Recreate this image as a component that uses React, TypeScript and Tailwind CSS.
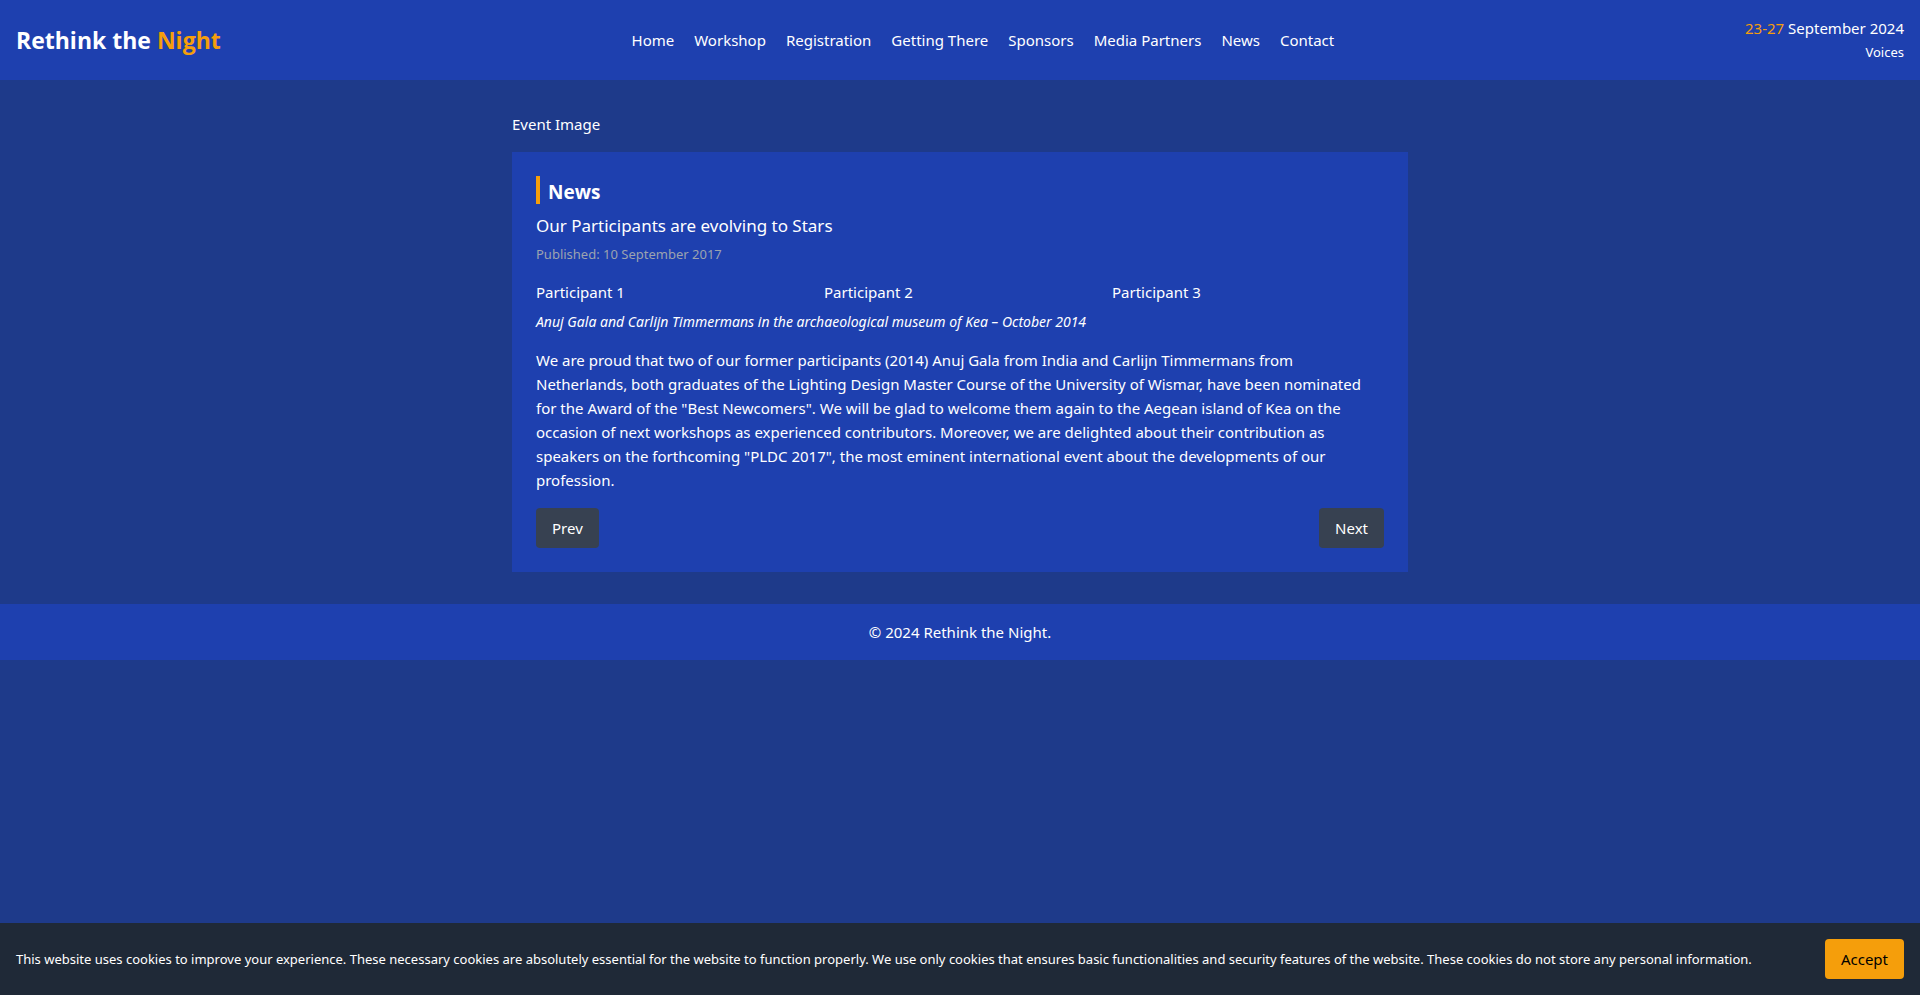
const navLinks = [
  'Home',
  'Workshop',
  'Registration',
  'Getting There',
  'Sponsors',
  'Media Partners',
  'News',
  'Contact',
];

const participants = ['Participant 1', 'Participant 2', 'Participant 3'];

function Header() {
  return (
    <header className="flex items-center justify-between bg-[#1e40af] p-4">
      <div className="font-['Open_Sans',sans-serif] text-[23px] leading-8 font-bold">
        Rethink the <span className="text-[#f59e0b]">Night</span>
      </div>
      <nav className="flex gap-5">
        {navLinks.map((label) => (
          <a key={label} href="#">
            {label}
          </a>
        ))}
      </nav>
      <div className="text-right">
        <div>
          <span className="text-[#f59e0b]">23-27</span> September 2024
        </div>
        <a href="#" className="block text-[13px] leading-6">
          Voices
        </a>
      </div>
    </header>
  );
}

function NewsCard() {
  return (
    <section className="bg-[#1e40af] p-6">
      <h2 className="border-l-4 border-[#f59e0b] pt-1 pl-2 font-['Open_Sans',sans-serif] text-[19px] leading-6 font-bold">
        News
      </h2>
      <h3 className="mt-2 text-[17px] leading-7">Our Participants are evolving to Stars</h3>
      <p className="mt-1 text-[13px] leading-5 text-[#9ca3af]">Published: 10 September 2017</p>
      <div className="mt-4 grid grid-cols-3 gap-4">
        {participants.map((name) => (
          <div key={name}>{name}</div>
        ))}
      </div>
      <p className="mt-2 text-[14px] leading-5 italic">
        Anuj Gala and Carlijn Timmermans in the archaeological museum of Kea – October 2014
      </p>
      <p className="mt-4">
        We are proud that two of our former participants (2014) Anuj Gala from India and Carlijn
        Timmermans from Netherlands, both graduates of the Lighting Design Master Course of the
        University of Wismar, have been nominated for the Award of the "Best Newcomers". We will be
        glad to welcome them again to the Aegean island of Kea on the occasion of next workshops as
        experienced contributors. Moreover, we are delighted about their contribution as speakers on
        the forthcoming "PLDC 2017", the most eminent international event about the developments of
        our profession.
      </p>
      <div className="mt-4 flex justify-between">
        <button type="button" className="rounded bg-[#374151] px-4 py-2">
          Prev
        </button>
        <button type="button" className="rounded bg-[#374151] px-4 py-2">
          Next
        </button>
      </div>
    </section>
  );
}

function CookieBanner() {
  return (
    <div className="fixed inset-x-0 bottom-0 flex items-center justify-between bg-[#1f2937] p-4">
      <p className="text-[13px] leading-5">
        This website uses cookies to improve your experience. These necessary cookies are absolutely
        essential for the website to function properly. We use only cookies that ensures basic
        functionalities and security features of the website. These cookies do not store any personal
        information.
      </p>
      <button type="button" className="rounded bg-[#f59e0b] px-4 py-2 text-black">
        Accept
      </button>
    </div>
  );
}

export default function App() {
  return (
    <div className="min-h-screen bg-[#1e3a8a] font-['Noto_Sans',sans-serif] text-[15px] leading-6 text-white">
      <Header />
      <main className="mx-auto max-w-4xl py-8">
        <div className="mb-4">Event Image</div>
        <NewsCard />
      </main>
      <footer className="bg-[#1e40af] p-4 text-center">© 2024 Rethink the Night.</footer>
      <CookieBanner />
    </div>
  );
}
